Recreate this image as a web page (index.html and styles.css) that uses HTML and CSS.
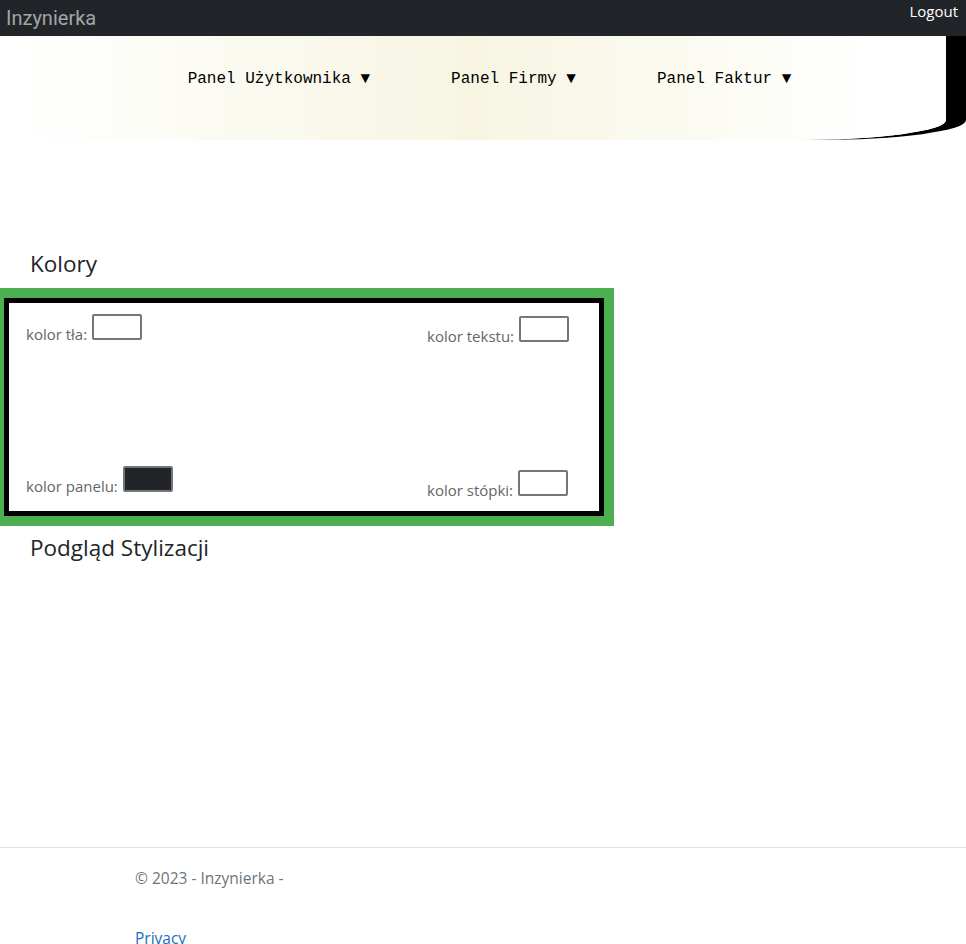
FILE: index.html
```html
<!DOCTYPE html>
<html lang="pl">
<head>
<meta charset="utf-8">
<title>Inzynierka</title>
<link rel="stylesheet" href="styles.css">
</head>
<body>
<header class="topbar">
  <a class="brand" href="#">Inzynierka</a>
  <a class="logout" href="#">Logout</a>
</header>
<nav class="menu">
  <ul class="menu-list">
    <li class="menu-item">Panel Użytkownika ▼</li>
    <li class="menu-item">Panel Firmy ▼</li>
    <li class="menu-item">Panel Faktur ▼</li>
  </ul>
</nav>
<main class="content">
  <h2 class="section-title">Kolory</h2>
  <div class="color-frame">
    <div class="color-grid">
      <label class="field field-tl">kolor tła: <input type="color" class="swatch" value="#ffffff"></label>
      <label class="field field-tr">kolor tekstu: <input type="color" class="swatch" value="#ffffff"></label>
      <label class="field field-bl">kolor panelu: <input type="color" class="swatch" value="#212529"></label>
      <label class="field field-br">kolor stópki: <input type="color" class="swatch" value="#ffffff"></label>
    </div>
  </div>
  <h2 class="section-title preview-title">Podgląd Stylizacji</h2>
</main>
<footer class="footer">
  <div class="footer-inner">
    <span class="copy">© 2023 - Inzynierka -</span>
    <a class="privacy" href="#">Privacy</a>
  </div>
</footer>
</body>
</html>
```

FILE: styles.css
```css
html, body {
  margin: 0;
  padding: 0;
}
body {
  font-family: "Open Sans", "Noto Sans", sans-serif;
  font-size: 15px;
  color: #212529;
  background: #fff;
  overflow: hidden;
}
.topbar {
  height: 36px;
  background: #212529;
  display: flex;
  justify-content: space-between;
  align-items: flex-start;
  position: relative;
  z-index: 2;
}
.brand {
  font-family: Roboto, "Liberation Sans", sans-serif;
  font-size: 20px;
  color: #a2a5a8;
  text-decoration: none;
  padding: 7px 0 0 6px;
  line-height: 22px;
}
.logout {
  font-size: 15px;
  color: #fff;
  text-decoration: none;
  padding: 1px 8px 0 0;
  line-height: 20px;
}
.menu {
  width: calc(100% - 20px);
  height: 104px;
  box-sizing: border-box;
  background: linear-gradient(to right, #ffffff 2%, #f7f5e2 50%, #ffffff 92%);
  border-bottom-right-radius: 150px 20px;
  box-shadow: 20px 0 0 #000;
  position: relative;
  z-index: 1;
}
.menu-list {
  list-style: none;
  margin: 0;
  padding: 34px 0 0 33px;
  display: flex;
  justify-content: center;
  gap: 81px;
}
.menu-item {
  font-family: "Liberation Mono", "DejaVu Sans Mono", monospace;
  font-size: 16px;
  line-height: 18px;
  color: #000;
  white-space: nowrap;
}
.content {
  height: 707px;
  box-sizing: border-box;
  padding: 110px 0 0 0;
}
.section-title {
  font-size: 22.5px;
  font-weight: 500;
  line-height: 28px;
  margin: 0 0 10px 30px;
  color: #212529;
}
.preview-title {
  margin-top: 8px;
}
.color-frame {
  width: 620px;
  height: 238px;
  box-sizing: border-box;
  margin-left: -6px;
  border: 10px solid #4caf50;
}
.color-grid {
  height: 100%;
  box-sizing: border-box;
  border: 5px solid #000;
  display: grid;
  grid-template-columns: 401px 1fr;
  grid-template-rows: 1fr 1fr;
  padding-left: 17px;
}
.field {
  display: flex;
  align-items: baseline;
  gap: 5px;
  color: #666;
  font-size: 15px;
}
.field-tl { align-self: start; padding-top: 11px; }
.field-tr { align-self: start; padding-top: 13px; }
.field-bl { align-self: end; padding-bottom: 15px; }
.field-br { align-self: end; padding-bottom: 11px; }
.swatch {
  -webkit-appearance: none;
  appearance: none;
  width: 50px;
  height: 26px;
  padding: 0;
  margin: 0;
  border: none;
  background: transparent;
  cursor: pointer;
}
.swatch::-webkit-color-swatch-wrapper {
  padding: 0;
}
.swatch::-webkit-color-swatch {
  border: 2px solid #767676;
  border-radius: 2px;
}
.footer {
  border-top: 1px solid #dee2e6;
  line-height: 60px;
  white-space: nowrap;
  color: #6c757d;
  font-size: 15.5px;
}
.footer-inner {
  max-width: 720px;
  box-sizing: border-box;
  margin: 0 auto;
  padding: 0 12px;
}
.copy {
  display: block;
}
.privacy {
  display: block;
  color: #1b6ec2;
  text-decoration: none;
}
```
